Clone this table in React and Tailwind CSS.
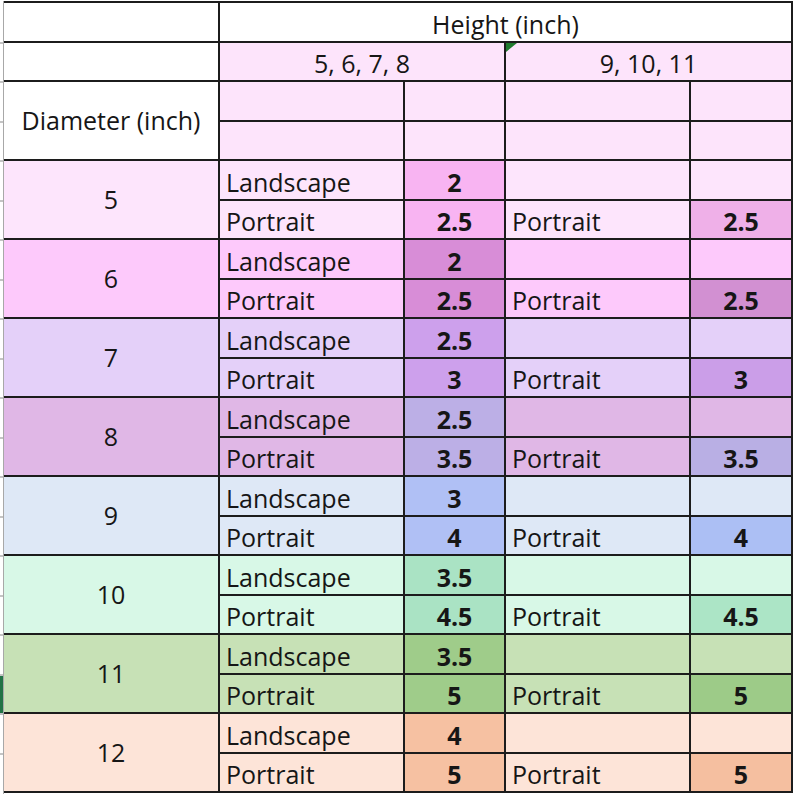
import React from 'react'

const GROUPS = [
  { d: '5', base: 'bg-[#fde5fc]', val: 'bg-[#f8b4f2]', val2: 'bg-[#efb0e8]', l: '2', p: '2.5', p2: '2.5' },
  { d: '6', base: 'bg-[#fdc9fb]', val: 'bg-[#d88dd7]', val2: 'bg-[#d290d2]', l: '2', p: '2.5', p2: '2.5' },
  { d: '7', base: 'bg-[#e4d0f9]', val: 'bg-[#cda0ec]', val2: 'bg-[#cb9ee8]', l: '2.5', p: '3', p2: '3' },
  { d: '8', base: 'bg-[#e0b7e6]', val: 'bg-[#bcafe6]', val2: 'bg-[#b9afe4]', l: '2.5', p: '3.5', p2: '3.5' },
  { d: '9', base: 'bg-[#dee8f6]', val: 'bg-[#b0c0f5]', val2: 'bg-[#acbff4]', l: '3', p: '4', p2: '4' },
  { d: '10', base: 'bg-[#d8f8e7]', val: 'bg-[#aae3c4]', val2: 'bg-[#ace5c6]', l: '3.5', p: '4.5', p2: '4.5' },
  { d: '11', base: 'bg-[#c7e1b6]', val: 'bg-[#9fcc8a]', val2: 'bg-[#9dcb88]', l: '3.5', p: '5', p2: '5' },
  { d: '12', base: 'bg-[#fde4d8]', val: 'bg-[#f6c1a2]', val2: 'bg-[#f5bfa0]', l: '4', p: '5', p2: '5' },
]

const HEAD = 'bg-[#fde4fb]'

function Label({ bg, children }) {
  return (
    <div className={`${bg} flex items-end pl-[6px] leading-[34px]`}>{children}</div>
  )
}

function Val({ bg, children }) {
  return (
    <div className={`${bg} flex items-end justify-center font-bold leading-[34px]`}>{children}</div>
  )
}

export default function App() {
  return (
    <div
      className="w-[794px] h-[794px] bg-white flex pt-[1px] overflow-hidden text-[25px] text-[#161616]"
      style={{ fontFamily: '"Open Sans", "Noto Sans", sans-serif' }}
    >
      {/* row gutter */}
      <div className="w-[3px] pt-[3px]">
        <div className="grid grid-rows-[repeat(20,37.5px)] gap-y-[2px] bg-[#c4c4c4]">
          {Array.from({ length: 20 }).map((_, i) => (
            <div key={i} className={i === 17 ? 'bg-[#217346]' : 'bg-white'} />
          ))}
        </div>
      </div>

      <div className="border-l border-[#a8a8a8]">
        <div className="grid grid-cols-[214px_183px_99px_183px_100px] grid-rows-[repeat(20,37.5px)] gap-[2px] bg-[#1c1c1c] border-2 border-l-0 border-[#1c1c1c]">
          {/* header */}
          <div className="bg-white" />
          <div className="col-span-4 bg-white flex items-end justify-center leading-[34px]">Height (inch)</div>

          <div className="bg-white" />
          <div className={`col-span-2 ${HEAD} flex items-end justify-center leading-[34px]`}>5, 6, 7, 8</div>
          <div className={`col-span-2 ${HEAD} relative flex items-end justify-center leading-[34px]`}>
            9, 10, 11
            <svg className="absolute left-0 top-0" width="11" height="9" viewBox="0 0 11 9">
              <path d="M0 0 L11 0 L0 9 Z" fill="#1f7a2e" />
            </svg>
          </div>

          <div className="row-span-2 bg-white flex items-center justify-center">Diameter (inch)</div>
          <div className={HEAD} />
          <div className={HEAD} />
          <div className={HEAD} />
          <div className={HEAD} />
          <div className={HEAD} />
          <div className={HEAD} />
          <div className={HEAD} />
          <div className={HEAD} />

          {GROUPS.map(g => (
            <React.Fragment key={g.d}>
              <div className={`row-span-2 ${g.base} flex items-center justify-center`}>{g.d}</div>
              <Label bg={g.base}>Landscape</Label>
              <Val bg={g.val}>{g.l}</Val>
              <div className={g.base} />
              <div className={g.base} />

              <Label bg={g.base}>Portrait</Label>
              <Val bg={g.val}>{g.p}</Val>
              <Label bg={g.base}>Portrait</Label>
              <Val bg={g.val2}>{g.p2}</Val>
            </React.Fragment>
          ))}
        </div>
      </div>
    </div>
  )
}
